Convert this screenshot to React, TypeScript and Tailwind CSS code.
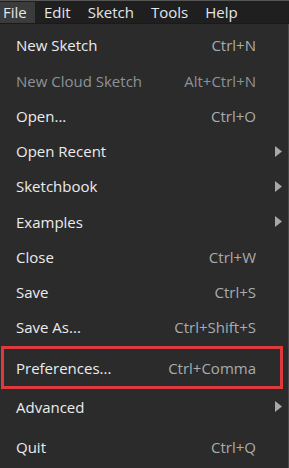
import React from "react";

type Item = { label: string; shortcut?: string; sub?: boolean; disabled?: boolean };

const rowsA: Item[] = [
  { label: "New Sketch", shortcut: "Ctrl+N" },
  { label: "New Cloud Sketch", shortcut: "Alt+Ctrl+N", disabled: true },
  { label: "Open...", shortcut: "Ctrl+O" },
  { label: "Open Recent", sub: true },
  { label: "Sketchbook", sub: true },
  { label: "Examples", sub: true },
  { label: "Close", shortcut: "Ctrl+W" },
  { label: "Save", shortcut: "Ctrl+S" },
  { label: "Save As...", shortcut: "Ctrl+Shift+S" },
];

function Arrow() {
  return (
    <svg width="7" height="11" viewBox="0 0 7 11" className="absolute right-[6px]">
      <path d="M0 0 L7 5.5 L0 11 Z" fill="#a8a8a8" />
    </svg>
  );
}

function Row({ item, h = "h-[35.25px]" }: { item: Item; h?: string }) {
  return (
    <div className={`relative flex items-center ${h} pl-[16px] pr-[32px]`}>
      <span className={`flex-1 ${item.disabled ? "text-[#8d9297]" : "text-[#ececec]"}`}>{item.label}</span>
      {item.shortcut && (
        <span className={item.disabled ? "text-[#8d9297]" : "text-[#a9abad]"}>{item.shortcut}</span>
      )}
      {item.sub && <Arrow />}
    </div>
  );
}

export default function App() {
  return (
    <div
      className="w-[289px] h-[468px] bg-[#2b2b2c] overflow-hidden text-[15px] flex flex-col"
      style={{ fontFamily: '"Open Sans", "Noto Sans", sans-serif' }}
    >
      <div className="h-[24px] bg-[#1f1f1f] border-t border-[#555] border-b border-b-[#1a1a1a] flex items-stretch text-[#e3e6ea]">
        <div className="bg-[#3b3b3c] px-[3px] mt-[1px] flex items-center w-[35px]">File</div>
        <div className="flex items-center ml-[9px]">Edit</div>
        <div className="flex items-center ml-[17px]">Sketch</div>
        <div className="flex items-center ml-[17px]">Tools</div>
        <div className="flex items-center ml-[17px]">Help</div>
      </div>
      <div className="flex-1 border-r border-[#4a4a4a] pt-[4px] flex flex-col">
        {rowsA.map((r) => (
          <Row key={r.label} item={r} />
        ))}
        <div className="mx-[1px] mt-[1px] mr-[5px] border-[3px] border-[#dc3a3c] h-[43px] flex items-center pl-[12px] pr-[24px]">
          <span className="flex-1 text-[#ececec]">Preferences...</span>
          <span className="text-[#a9abad]">Ctrl+Comma</span>
        </div>
        <Row item={{ label: "Advanced", sub: true }} />
        <div className="h-[5px]" />
        <Row item={{ label: "Quit", shortcut: "Ctrl+Q" }} />
      </div>
    </div>
  );
}
